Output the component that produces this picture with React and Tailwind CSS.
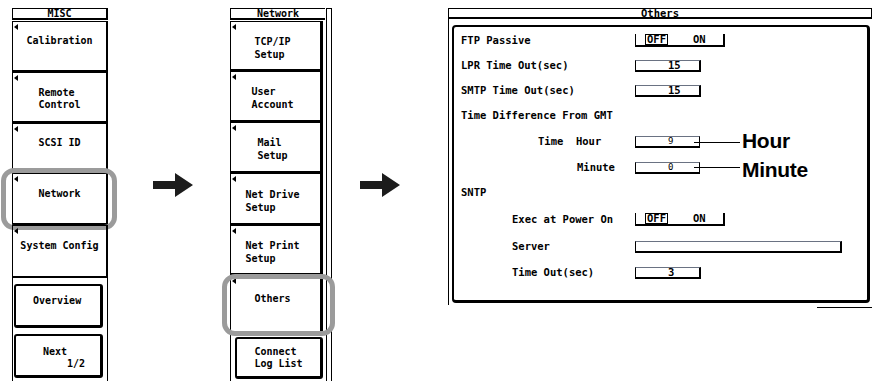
import React from "react";

const lcd = "font-['DejaVu_Sans_Mono',monospace] font-bold text-black";

function Tri() {
  return (
    <div className="ml-px mt-[2px] w-0 h-0 border-y-[3px] border-y-transparent border-r-[4px] border-r-black" />
  );
}

function MiscKey({ h, text, single, ring }) {
  return (
    <div className={`relative flex flex-col border-l border-t border-r-2 border-b-2 border-black ${h}`}>
      <Tri />
      <div className={`flex-1 flex items-center justify-center ${single ? "pb-[18px]" : "pb-[4px]"}`}>
        <div className="whitespace-pre leading-[12px] text-left">{text}</div>
      </div>
      {ring && (
        <div className="absolute -left-[12px] -right-[11px] -top-[6px] -bottom-[7px] border-[5px] border-[#9b9b9b] rounded-[13px]" />
      )}
    </div>
  );
}

function NetKey({ h, text, single, ring }) {
  return (
    <div className={`relative flex flex-col border-l border-t border-r-[3px] border-b-2 border-black ${h}`}>
      <Tri />
      <div className={`flex-1 flex items-center justify-center ${single ? "pb-[20px]" : "pb-[4px]"}`}>
        <div className="whitespace-pre leading-[13px] text-left -ml-[6px]">{text}</div>
      </div>
      {ring && (
        <div className="absolute -left-[9px] -right-[15px] -top-[2px] -bottom-[3px] border-[5px] border-[#9b9b9b] rounded-[13px]" />
      )}
    </div>
  );
}

function Arrow() {
  return (
    <svg width="40" height="24" viewBox="0 0 40 24">
      <path d="M0 8 H22 V0 L40 12 L22 24 V16 H0 Z" fill="#1c1c1c" />
    </svg>
  );
}

function NumField({ value }) {
  return (
    <div className="h-[12px] w-[66px] border-t border-l border-b-2 border-r-2 border-black border-t-gray-500 flex items-center pl-[32px] leading-none">
      {value}
    </div>
  );
}

function OnOff() {
  return (
    <div className="flex h-[13px] leading-none">
      <div className="w-[33px] border-l border-b-2 border-black flex justify-end">
        <span className="border border-black px-[1px] flex items-center">OFF</span>
      </div>
      <div className="w-[57px] border-b-2 border-r-2 border-black flex items-center pl-[25px]">ON</div>
    </div>
  );
}

function Callout({ value, text, shift }) {
  return (
    <div className="flex items-center">
      <div className="h-[12px] w-[65px] border-t border-l border-b-2 border-r border-black border-t-gray-500 flex items-center pl-[32px] leading-none text-[9px] font-normal">
        {value}
      </div>
      <div className="w-[46px] h-px bg-black -ml-[6px] mr-[2px]" />
      <div className={`font-['Liberation_Sans',Arial,sans-serif] font-bold text-[21px] leading-none tracking-[-0.3px] ${shift}`}>
        {text}
      </div>
    </div>
  );
}

const rows = [
  { h: "h-[25px]", label: "FTP Passive", pl: "", field: <OnOff /> },
  { h: "h-[25px]", label: "LPR Time Out(sec)", pl: "", field: <NumField value="15" /> },
  { h: "h-[25px]", label: "SMTP Time Out(sec)", pl: "", field: <NumField value="15" /> },
  { h: "h-[26px]", label: "Time Difference From GMT", pl: "", field: null },
  { h: "h-[26px]", label: "Time  Hour", pl: "pl-[77px]", field: <Callout value="9" text="Hour" shift="-mt-[3px]" /> },
  { h: "h-[25px]", label: "Minute", pl: "pl-[116px]", field: <Callout value="0" text="Minute" shift="mt-[3px]" /> },
  { h: "h-[26px]", label: "SNTP", pl: "", field: null },
  { h: "h-[27px]", label: "Exec at Power On", pl: "pl-[51px]", field: <OnOff /> },
  {
    h: "h-[27px]",
    label: "Server",
    pl: "pl-[51px]",
    field: <div className="h-[12px] w-[207px] border-t border-l border-b-2 border-r-2 border-black border-t-gray-500" />,
  },
  { h: "h-[26px]", label: "Time Out(sec)", pl: "pl-[51px]", field: <NumField value="3" /> },
];

export default function App() {
  return (
    <div className={`w-[874px] h-[381px] overflow-hidden bg-white flex items-start pl-[12px] ${lcd} text-[10px]`}>
      {/* MISC */}
      <div className="w-[96px] h-[381px] pt-[8px] flex flex-col">
        <div className="h-[12px] border-t border-x border-b-2 border-black border-r-2 flex items-center justify-center leading-[9px]">
          MISC
        </div>
        <div className="mt-px">
          <MiscKey h="h-[51px]" text="Calibration" single />
          <MiscKey h="h-[51px]" text={"Remote\nControl"} />
          <MiscKey h="h-[50px]" text="SCSI ID" single />
          <MiscKey h="h-[52px]" text="Network" single ring />
          <MiscKey h="h-[53px]" text="System Config" single />
        </div>
        <div className="flex-1 border-x border-black pl-px pr-[4px]">
          <div className="mt-[6px] h-[44px] border-2 border-r-[3px] border-b-[3px] border-black rounded-[3px] pt-[10px] pl-[17px] leading-none">
            Overview
          </div>
          <div className="mt-[6px] h-[44px] border-2 border-r-[3px] border-b-[3px] border-black rounded-[3px] pt-[10px] pl-[27px] leading-[12px] whitespace-pre">
            {"Next\n    1/2"}
          </div>
        </div>
      </div>

      <div className="ml-[45px] mt-[173px]">
        <Arrow />
      </div>

      {/* Network */}
      <div className="ml-[37px] w-[102px] h-[381px] pt-[8px] flex">
        <div className="w-[95px] flex flex-col">
          <div className="h-[12px] border-t border-l border-b-2 border-black flex items-center justify-center leading-[9px]">
            Network
          </div>
          <div className="mt-px pr-[2px]">
            <NetKey h="h-[50px]" text={"TCP/IP\nSetup"} />
            <NetKey h="h-[51px]" text={"User\nAccount"} />
            <NetKey h="h-[51px]" text={"Mail\nSetup"} />
            <NetKey h="h-[52px]" text={"Net Drive\nSetup"} />
            <NetKey h="h-[50px]" text={"Net Print\nSetup"} />
            <NetKey h="h-[60px]" text="Others" single ring />
          </div>
          <div className="flex-1 border-l border-black pl-[4px] pr-[2px]">
            <div className="mt-[2px] h-[42px] border-2 border-r-[3px] border-b-[3px] border-black rounded-[3px] flex items-center justify-center">
              <div className="whitespace-pre leading-[12px] text-left">{"Connect\nLog List"}</div>
            </div>
          </div>
        </div>
        <div className="ml-px w-[6px] border-x border-t border-black" />
      </div>

      <div className="ml-[28px] mt-[173px]">
        <Arrow />
      </div>

      {/* Others */}
      <div className="ml-[48px] mt-[8px] w-[424px] flex flex-col text-[10.5px]">
        <div className="h-[11px] border-t border-x border-b-2 border-black flex items-center justify-center leading-[8px]">
          Others
        </div>
        <div className="border-l border-black pl-[3px] pt-[6px] pb-[2px]">
          <div className="w-[418px] h-[278px] border-2 border-r-[3px] border-b-[3px] border-black rounded-[4px] pt-px pl-[7px]">
            {rows.map((r) => (
              <div key={r.label} className={`flex items-center ${r.h}`}>
                <div className={`w-[174px] whitespace-pre ${r.pl}`}>{r.label}</div>
                {r.field}
              </div>
            ))}
          </div>
        </div>
        <div className="ml-auto mt-[2px] w-[55px] border-t border-black" />
      </div>
    </div>
  );
}
